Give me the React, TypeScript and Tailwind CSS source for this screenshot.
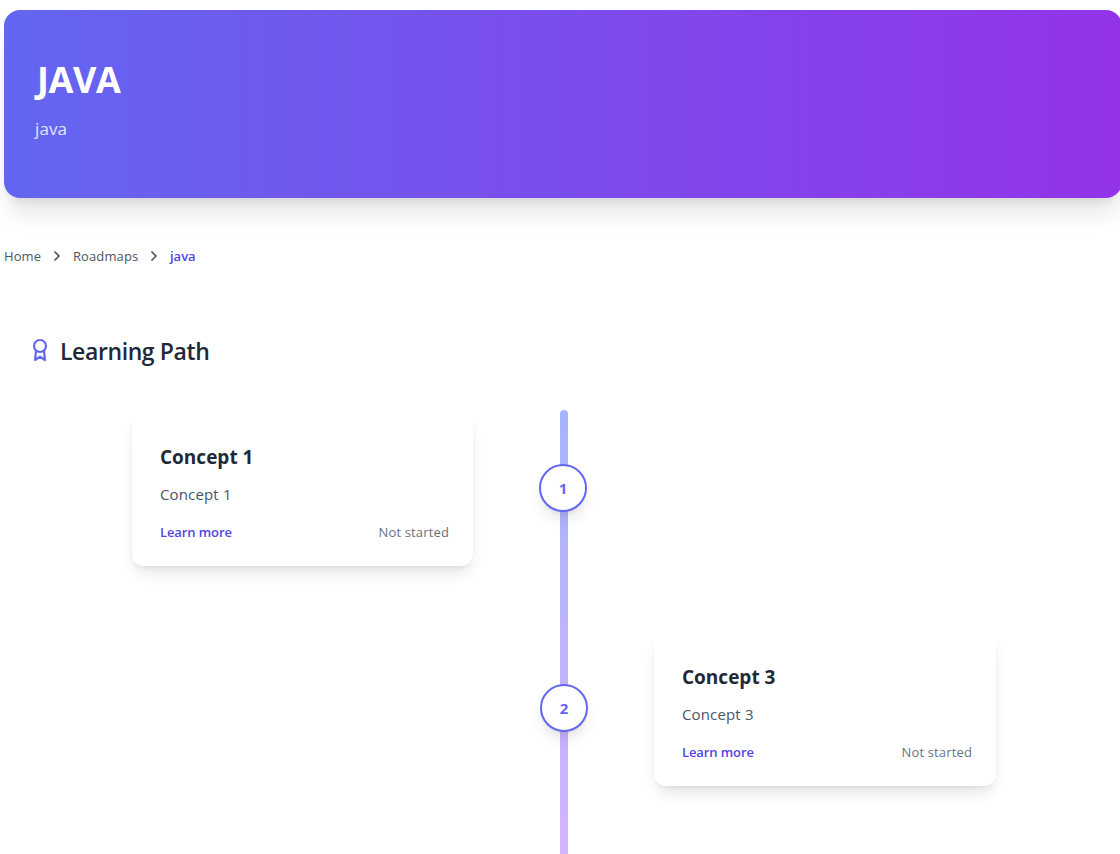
import { Fragment } from "react";

const crumbs = ["Home", "Roadmaps"];

function Chevron() {
  return (
    <svg className="h-4 w-4" viewBox="0 0 24 24" fill="none" stroke="currentColor" strokeWidth="2.6" strokeLinecap="round" strokeLinejoin="round">
      <path d="m9 18 6-6-6-6" />
    </svg>
  );
}

function Card({ title }: { title: string }) {
  return (
    <div className="h-[156px] rounded-xl bg-white pt-[33px] pr-6 pl-7 shadow-lg">
      <h3 className="text-[19px] leading-7 font-bold text-[#1f2937]">{title}</h3>
      <p className="mt-[11px] text-[15px] leading-6 tracking-[0.15px] text-[#4b5563]">{title}</p>
      <div className="mt-4 flex items-center justify-between leading-5">
        <a className="text-[13px] font-semibold tracking-[-0.1px] text-[#4f46e5]">Learn more</a>
        <span className="text-[13px] tracking-[0.15px] text-[#6b7280]">Not started</span>
      </div>
    </div>
  );
}

function Step({ n }: { n: number }) {
  return (
    <div className="relative flex h-12 w-12 items-center justify-center rounded-full border-2 border-[#6366f1] bg-white text-[15px] font-bold text-[#6366f1] shadow-lg">
      {n}
    </div>
  );
}

export default function App() {
  return (
    <div className="h-[854px] w-[1120px] overflow-hidden bg-white pt-[10px] pl-1 font-['Open_Sans','Noto_Sans',sans-serif]">
      <header className="h-[188px] w-[1118px] rounded-2xl bg-[linear-gradient(to_right,#6366f1,#9333ea)] pt-[50px] pl-[31px] text-white shadow-xl">
        <h1 className="pl-0.5 text-[36px] leading-10 font-bold tracking-[-0.4px]">JAVA</h1>
        <p className="mt-[15px] text-[17px] leading-7 tracking-[0.1px] text-[#e0e7ff]">java</p>
      </header>

      <nav className="mt-[49px] flex h-5 items-center text-[13px] text-[#4b5563]">
        {crumbs.map((c, i) => (
          <Fragment key={c}>
            <a className={i === 0 ? "w-[45px] tracking-[0.1px]" : "w-[73px] tracking-[0.1px]"}>{c}</a>
            <span className="w-6 -translate-y-px"><Chevron /></span>
          </Fragment>
        ))}
        <span className="font-semibold text-[#4f46e5]">java</span>
      </nav>

      <main>
        <h2 className="mt-[68px] ml-6 flex h-8 items-center text-[23px] font-semibold tracking-[-0.4px] text-[#1f2937]">
          <svg className="mr-2 h-6 w-6 -translate-y-px text-[#6366f1]" viewBox="0 0 24 24" fill="none" stroke="currentColor" strokeWidth="2.2" strokeLinecap="round" strokeLinejoin="round">
            <circle cx="12" cy="8" r="6" />
            <path d="M8 13.4 7 22l5-3.2 5 3.2-1-8.6" />
          </svg>
          Learning Path
        </h2>

        <div className="relative mt-[43px] flex h-[500px] flex-col gap-16">
          <div className="absolute top-0 left-[556px] h-full w-2 rounded-full bg-[linear-gradient(to_bottom,#a5b4fc,#d8b4fe)]" />
          <div className="flex items-center pl-32">
            <div className="mr-[66px] w-[341px]"><Card title="Concept 1" /></div>
            <Step n={1} />
          </div>
          <div className="flex items-center pl-[536px]">
            <Step n={2} />
            <div className="ml-[66px] w-[342px]"><Card title="Concept 3" /></div>
          </div>
        </div>
      </main>
    </div>
  );
}
